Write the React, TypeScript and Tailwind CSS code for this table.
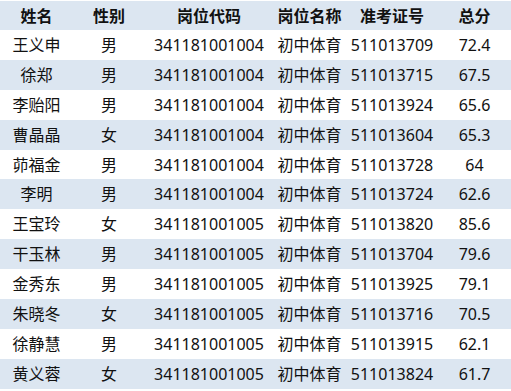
import React from 'react';

type Row = {
  name: string;
  sex: string;
  code: string;
  post: string;
  ticket: string;
  score: string;
};

const rows: Row[] = [
  { name: '王义申', sex: '男', code: '341181001004', post: '初中体育', ticket: '511013709', score: '72.4' },
  { name: '徐郑', sex: '男', code: '341181001004', post: '初中体育', ticket: '511013715', score: '67.5' },
  { name: '李贻阳', sex: '男', code: '341181001004', post: '初中体育', ticket: '511013924', score: '65.6' },
  { name: '曹晶晶', sex: '女', code: '341181001004', post: '初中体育', ticket: '511013604', score: '65.3' },
  { name: '茆福金', sex: '男', code: '341181001004', post: '初中体育', ticket: '511013728', score: '64' },
  { name: '李明', sex: '男', code: '341181001004', post: '初中体育', ticket: '511013724', score: '62.6' },
  { name: '王宝玲', sex: '女', code: '341181001005', post: '初中体育', ticket: '511013820', score: '85.6' },
  { name: '干玉林', sex: '男', code: '341181001005', post: '初中体育', ticket: '511013704', score: '79.6' },
  { name: '金秀东', sex: '男', code: '341181001005', post: '初中体育', ticket: '511013925', score: '79.1' },
  { name: '朱晓冬', sex: '女', code: '341181001005', post: '初中体育', ticket: '511013716', score: '70.5' },
  { name: '徐静慧', sex: '男', code: '341181001005', post: '初中体育', ticket: '511013915', score: '62.1' },
  { name: '黄义蓉', sex: '女', code: '341181001005', post: '初中体育', ticket: '511013824', score: '61.7' },
];

// column widths follow the centres of the text in the sheet
const cols = ['w-[73px]', 'w-[72px]', 'w-[128px]', 'w-[73px]', 'w-[92px]', 'w-[73px]'];

const Cells: React.FC<{ values: string[] }> = ({ values }) => (
  <>
    {values.map((v, i) => (
      <div key={i} className={`${cols[i]} shrink-0 flex items-center justify-center whitespace-nowrap`}>
        {v}
      </div>
    ))}
  </>
);

const App: React.FC = () => {
  return (
    <div
      className="w-[511px] h-[391px] bg-white pt-px text-[16px] text-[#111] overflow-hidden"
      style={{ fontFamily: '"Noto Sans", "Noto Sans CJK SC", sans-serif' }}
    >
      {/* Header */}
      <div className="flex h-[29px] bg-[#dce6f1] font-bold">
        <Cells values={['姓名', '性别', '岗位代码', '岗位名称', '准考证号', '总分']} />
      </div>

      {/* Rows */}
      {rows.map((r, i) => (
        <div key={r.ticket} className={`flex h-[29.9px] ${i % 2 === 1 ? 'bg-[#dce6f1]' : 'bg-white'}`}>
          <Cells values={[r.name, r.sex, r.code, r.post, r.ticket, r.score]} />
        </div>
      ))}
    </div>
  );
};

export default App;
